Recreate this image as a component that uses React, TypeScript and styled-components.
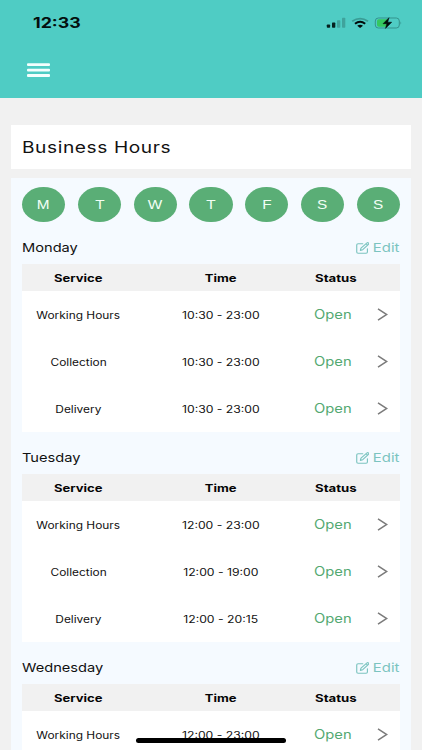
import React from "react";
import styled, { createGlobalStyle } from "styled-components";

const GlobalStyle = createGlobalStyle`
  * { box-sizing: border-box; }
  html, body { margin: 0; padding: 0; }
  body {
    width: 100%;
    height: 750px;
    overflow: hidden;
    background: #f1f1f1;
    font-family: Inter, "Liberation Sans", sans-serif;
    color: #111;
  }
`;

const Screen = styled.div`
  position: relative;
  width: 422px;
  height: 750px;
  overflow: hidden;
  background: #f1f1f1;
`;

const Header = styled.header`
  height: 98px;
  background: #4fccc4;
`;

const StatusBar = styled.div`
  display: flex;
  align-items: center;
  justify-content: space-between;
  height: 45px;
  padding: 0 20px 0 32.5px;
`;

/* Wide lettering: the glyphs are scaled sideways from one edge or the centre. */
const Wide = styled.span<{ $scale?: number; $origin?: string }>`
  display: inline-block;
  white-space: nowrap;
  transform: scaleX(${(p) => p.$scale ?? 1.22});
  transform-origin: ${(p) => p.$origin ?? "center"} center;
`;

const Clock = styled.div`
  font-size: 14px;
  font-weight: 700;
  line-height: 20px;
  color: #04100f;
`;

const StatusIcons = styled.svg`
  display: block;
  width: 78px;
  height: 16px;
`;

const MenuButton = styled.button`
  display: block;
  margin: 18px 0 0 26.7px;
  padding: 0;
  border: 0;
  background: none;
`;

const MenuGlyph = styled.svg`
  display: block;
  width: 23px;
  height: 14px;
`;

const TitleCard = styled.h1`
  display: flex;
  align-items: center;
  height: 44.5px;
  margin: 26.5px 11px 0;
  padding: 0 11.3px;
  background: #fff;
  font-size: 16px;
  font-weight: 400;
  letter-spacing: 0.5px;
  color: #111;
`;

const Panel = styled.main`
  height: 600px;
  margin: 8.7px 11px 0;
  padding: 9px 11px 0;
  background: #f5faff;
`;

const DayPicker = styled.div`
  display: flex;
  justify-content: space-between;
`;

const DayButton = styled.button`
  display: flex;
  align-items: center;
  justify-content: center;
  width: 43.2px;
  height: 35.5px;
  padding: 1px 0 0;
  border: 0;
  border-radius: 50%;
  background: #5aae76;
  color: #f3fff6;
  font: 400 12.6px "Liberation Sans", sans-serif;
`;

const DaySection = styled.section`
  height: 210px;
`;

const DayHeader = styled.div`
  display: flex;
  align-items: center;
  justify-content: space-between;
  height: 42px;
  padding-top: 10px;
  font-size: 12px;
  line-height: 18px;
`;

const DayName = styled.h2`
  margin: 0;
  font: inherit;
`;

const EditLink = styled.a`
  display: flex;
  align-items: center;
  justify-content: flex-end;
  padding-right: 0.4px;
  color: #7cc4c0;
  gap: 9px;
`;

const EditGlyph = styled.svg`
  width: 13.5px;
  height: 12px;
`;

const HoursTable = styled.div`
  background: #fff;
`;

const Row = styled.div`
  display: grid;
  grid-template-columns: 113px 171px 71px 23px;
  align-items: center;
  height: 47px;
  font-size: 10px;
`;

const HeadRow = styled(Row)`
  height: 27px;
  background: #f1f1f1;
  font-size: 10.3px;
  font-weight: 700;
  color: #050505;
`;

const Cell = styled.div`
  text-align: center;
`;

const StatusCell = styled.div`
  padding-left: 8.5px;
`;

const OpenLabel = styled(StatusCell)`
  padding-left: 8.2px;
  font-size: 12.5px;
  color: #54a972;
`;

const Chevron = styled.svg`
  width: 11px;
  height: 13px;
`;

const HomeIndicator = styled.div`
  position: absolute;
  left: 136px;
  top: 738px;
  width: 150px;
  height: 4.5px;
  border-radius: 3px;
  background: #000;
`;

const initials = ["M", "T", "W", "T", "F", "S", "S"];

const days = [
  {
    name: "Monday",
    hours: [
      ["Working Hours", "10:30 - 23:00"],
      ["Collection", "10:30 - 23:00"],
      ["Delivery", "10:30 - 23:00"],
    ],
  },
  {
    name: "Tuesday",
    hours: [
      ["Working Hours", "12:00 - 23:00"],
      ["Collection", "12:00 - 19:00"],
      ["Delivery", "12:00 - 20:15"],
    ],
  },
  { name: "Wednesday", hours: [["Working Hours", "12:00 - 23:00"]] },
];

function PhoneStatus() {
  return (
    <StatusIcons viewBox="0 0 78 16">
      <g fill="#06201e">
        <rect x="2.8" y="9.5" width="3.3" height="3.2" rx="0.7" />
        <rect x="8" y="7.6" width="3.3" height="5.1" rx="0.7" />
        <g fill="#3fa39c">
          <rect x="13" y="5.2" width="3.3" height="7.5" rx="0.7" />
          <rect x="18" y="2.8" width="3.3" height="9.9" rx="0.7" />
        </g>
      </g>
      <g fill="none" strokeWidth="2">
        <path d="M28.2 6.3 Q36.1 1 44 6.3" stroke="#3a9c95" strokeWidth="1.7" />
        <path d="M31 8.8 Q36.1 4.7 41.2 8.8" stroke="#020b0a" />
      </g>
      <path d="M33.2 10.7 Q36.1 8.6 39 10.7 L36.1 13Z" fill="#020b0a" />
      <rect x="51.3" y="3" width="24" height="10" rx="3" fill="none" stroke="#35938d" />
      <path d="M54.8 4.3 H63 V11.7 H54.8 Q53 11.7 53 10 V6 Q53 4.3 54.8 4.3Z" fill="#35c75f" />
      <path d="M76.5 6.3 Q78 8 76.5 9.7Z" fill="#35938d" />
      <path d="M65 2.7 L59 8.7 H62.8 L61.5 13.4 L67.7 7.2 H63.7Z" fill="#020b0a" stroke="#020b0a" strokeWidth="0.5" />
    </StatusIcons>
  );
}

function EditIcon() {
  return (
    <EditGlyph viewBox="0 0 13 12" preserveAspectRatio="none" fill="none" stroke="currentColor" strokeWidth="1.1" strokeLinejoin="round" strokeLinecap="round">
      <path d="M6.5 1.8 H2 Q0.7 1.8 0.7 3 V10 Q0.7 11.2 2 11.2 H9.7 Q11 11.2 11 10 V6.7" />
      <path d="M4.2 8.4 L4.8 6.2 L10.6 0.9 Q11.3 0.4 12 1 Q12.7 1.6 12 2.3 L6.5 7.7Z M9.7 1.8 L11.2 3.1" />
    </EditGlyph>
  );
}

export default function App() {
  return (
    <>
      <GlobalStyle />
      <Screen>
        <Header>
          <StatusBar>
            <Clock><Wide $scale={1.27} $origin="left">12:33</Wide></Clock>
            <PhoneStatus />
          </StatusBar>
          <MenuButton aria-label="Menu">
            <MenuGlyph viewBox="0 0 23 14" fill="#f4fffe">
              <rect y="0.2" width="23" height="2.9" rx="1" />
              <rect y="5.7" width="23" height="2.9" rx="1" />
              <rect y="11.1" width="23" height="2.9" rx="1" />
            </MenuGlyph>
          </MenuButton>
        </Header>
        <TitleCard><Wide $scale={1.195} $origin="left">Business Hours</Wide></TitleCard>
        <Panel>
          <DayPicker>
            {initials.map((letter, i) => (
              <DayButton key={i}><Wide>{letter}</Wide></DayButton>
            ))}
          </DayPicker>
          {days.map((day) => (
            <DaySection key={day.name}>
              <DayHeader>
                <DayName><Wide $origin="left">{day.name}</Wide></DayName>
                <EditLink>
                  <EditIcon />
                  <Wide $scale={1.24} $origin="right">Edit</Wide>
                </EditLink>
              </DayHeader>
              <HoursTable>
                <HeadRow>
                  <Cell><Wide $scale={1.26}>Service</Wide></Cell>
                  <Cell><Wide $scale={1.26}>Time</Wide></Cell>
                  <StatusCell><Wide $scale={1.28} $origin="left">Status</Wide></StatusCell>
                </HeadRow>
                {day.hours.map(([service, time]) => (
                  <Row key={service}>
                    <Cell><Wide $scale={1.19}>{service}</Wide></Cell>
                    <Cell><Wide>{time}</Wide></Cell>
                    <OpenLabel><Wide $scale={1.18} $origin="left">Open</Wide></OpenLabel>
                    <Chevron viewBox="0 0 11 13" fill="none" stroke="#7b7b7b" strokeWidth="1.5">
                      <path d="M1 0.8 L9.8 6.5 L1 12.2" />
                    </Chevron>
                  </Row>
                ))}
              </HoursTable>
            </DaySection>
          ))}
        </Panel>
        <HomeIndicator />
      </Screen>
    </>
  );
}
